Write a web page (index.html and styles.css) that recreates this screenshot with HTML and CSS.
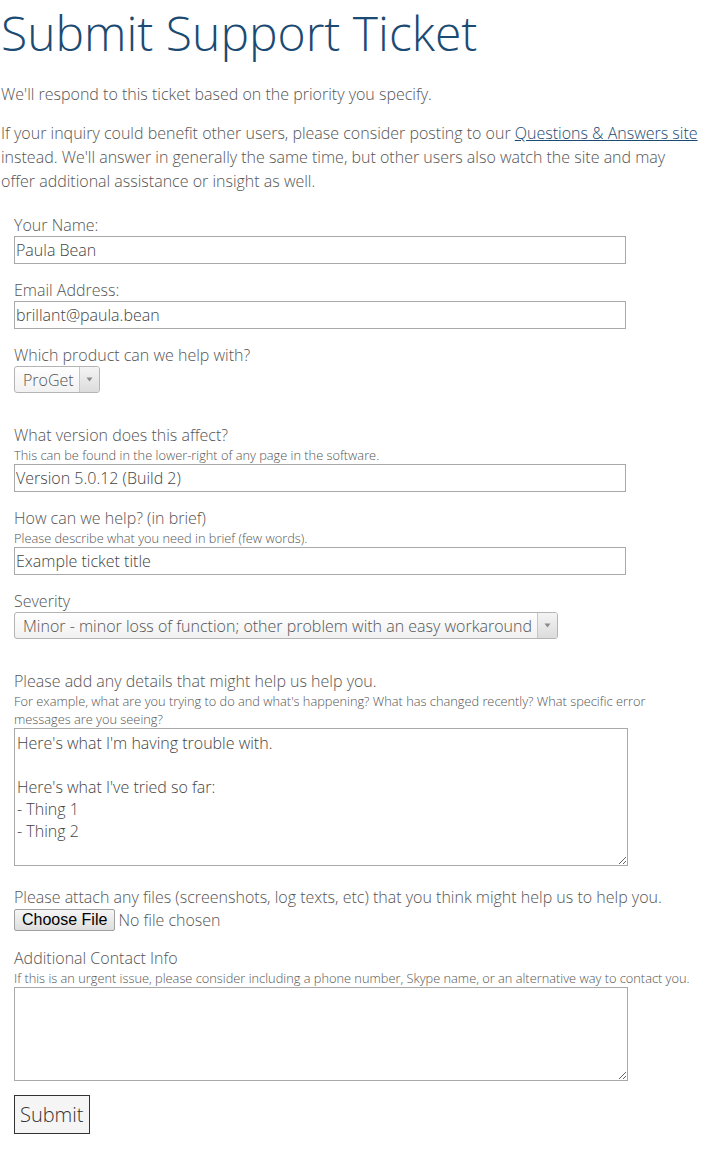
FILE: index.html
```html
<!DOCTYPE html>
<html>
<head>
<meta charset="utf-8">
<title>Submit Support Ticket</title>
<link rel="stylesheet" href="styles.css">
</head>
<body>
<h1 class="title">Submit Support Ticket</h1>
<p class="intro">We'll respond to this ticket based on the priority you specify.</p>
<p class="intro">If your inquiry could benefit other users, please consider posting to our <a href="#" class="link">Questions &amp; Answers site</a> instead. We'll answer in generally the same time, but other users also watch the site and may offer additional assistance or insight as well.</p>

<form class="form">
  <div class="field">
    <label class="label">Your Name:</label>
    <input class="text-input" type="text" value="Paula Bean">
  </div>
  <div class="field">
    <label class="label">Email Address:</label>
    <input class="text-input" type="text" value="brillant@paula.bean">
  </div>
  <div class="field field-select">
    <label class="label">Which product can we help with?</label>
    <div class="select select-product">
      <span class="select-value">ProGet</span>
      <span class="select-arrow"><svg width="7" height="5" viewBox="0 0 7 5"><path d="M0.5 0.5 L6.5 0.5 L3.5 4.5 Z" fill="#8a8a8a"/></svg></span>
    </div>
  </div>
  <div class="field">
    <label class="label">What version does this affect?</label>
    <div class="hint">This can be found in the lower-right of any page in the software.</div>
    <input class="text-input" type="text" value="Version 5.0.12 (Build 2)">
  </div>
  <div class="field">
    <label class="label">How can we help? (in brief)</label>
    <div class="hint">Please describe what you need in brief (few words).</div>
    <input class="text-input" type="text" value="Example ticket title">
  </div>
  <div class="field field-select">
    <label class="label">Severity</label>
    <div class="select select-severity">
      <span class="select-value">Minor - minor loss of function; other problem with an easy workaround</span>
      <span class="select-arrow"><svg width="7" height="5" viewBox="0 0 7 5"><path d="M0.5 0.5 L6.5 0.5 L3.5 4.5 Z" fill="#8a8a8a"/></svg></span>
    </div>
  </div>
  <div class="field field-details">
    <label class="label">Please add any details that might help us help you.</label>
    <div class="hint">For example, what are you trying to do and what's happening? What has changed recently? What specific error messages are you seeing?</div>
    <textarea class="textarea textarea-details">Here's what I'm having trouble with.

Here's what I've tried so far:
- Thing 1
- Thing 2</textarea>
  </div>
  <div class="field">
    <label class="label">Please attach any files (screenshots, log texts, etc) that you think might help us to help you.</label>
    <div class="file-row">
      <span class="file-button">Choose File</span>
      <span class="file-status">No file chosen</span>
    </div>
  </div>
  <div class="field field-contact">
    <label class="label">Additional Contact Info</label>
    <div class="hint">If this is an urgent issue, please consider including a phone number, Skype name, or an alternative way to contact you.</div>
    <textarea class="textarea textarea-contact"></textarea>
  </div>
  <button type="button" class="submit">Submit</button>
</form>
</body>
</html>
```

FILE: styles.css
```css
html, body {
  background: #fff;
}
body {
  margin: 0;
  padding: 0 8px 16px 1px;
  font-family: "Open Sans", "Liberation Sans", sans-serif;
  font-weight: 300;
  font-size: 16px;
  color: #555;
}
.title {
  margin: 0 0 16px 0;
  font-size: 48px;
  font-weight: 300;
  line-height: 66px;
  color: #1b4b73;
}
.intro {
  margin: 0 0 15px 0;
  line-height: 24px;
}
.link {
  color: #1b4b73;
  text-decoration: underline;
}
.form {
  margin: 21px 0 0 0;
  padding-left: 13px;
}
.field {
  margin-bottom: 15px;
}
.field-select {
  margin-bottom: 31px;
}
.field-details {
  margin-bottom: 20px;
}
.field-contact {
  margin-bottom: 14px;
}
.label {
  display: block;
  line-height: 22px;
}
.hint {
  font-size: 12.8px;
  line-height: 18px;
  color: #555;
}
.text-input {
  display: block;
  box-sizing: border-box;
  width: 612px;
  height: 28px;
  margin: 0;
  padding: 0 1px;
  border: 1px solid #a9a9a9;
  border-radius: 0;
  font-family: "Open Sans", "Liberation Sans", sans-serif;
  font-weight: 300;
  font-size: 16px;
  color: #444;
  background: #fff;
  outline: none;
}
.select {
  display: flex;
  box-sizing: border-box;
  height: 27px;
  border: 1px solid #b4b4b4;
  border-radius: 3px;
  background: linear-gradient(#ffffff, #f1f1f1);
  overflow: hidden;
}
.select-product {
  width: 86px;
}
.select-severity {
  width: 544px;
}
.select-value {
  flex: 1;
  padding-left: 8px;
  line-height: 26px;
  font-size: 16px;
  color: #555;
  white-space: nowrap;
}
.select-arrow {
  display: flex;
  align-items: center;
  justify-content: center;
  width: 19px;
  border-left: 1px solid #c6c6c6;
  background: linear-gradient(#f4f4f4, #dcdcdc);
}
.textarea {
  display: block;
  box-sizing: border-box;
  width: 614px;
  margin: 0;
  padding: 3px 2px;
  border: 1px solid #a9a9a9;
  font-family: "Open Sans", "Liberation Sans", sans-serif;
  font-weight: 300;
  font-size: 16px;
  line-height: 22px;
  color: #444;
  background: #fff;
  outline: none;
}
.textarea-details {
  height: 138px;
}
.textarea-contact {
  height: 94px;
}
.file-row {
  display: flex;
  align-items: center;
  height: 24px;
}
.file-button {
  box-sizing: border-box;
  height: 22px;
  padding: 0 7px;
  border: 1px solid #a0a0a0;
  border-radius: 2px;
  background: linear-gradient(#f6f6f6, #dedede);
  font-family: "Liberation Sans", Arial, sans-serif;
  font-weight: 400;
  font-size: 16px;
  line-height: 20px;
  color: #000;
}
.file-status {
  margin-left: 3px;
  color: #555;
}
.submit {
  display: block;
  box-sizing: border-box;
  height: 39px;
  margin: 0;
  padding: 0 5px;
  border: 1px solid #333;
  border-radius: 0;
  background: #f5f5f5;
  font-family: "Open Sans", "Liberation Sans", sans-serif;
  font-weight: 300;
  font-size: 20px;
  color: #333;
}
```
